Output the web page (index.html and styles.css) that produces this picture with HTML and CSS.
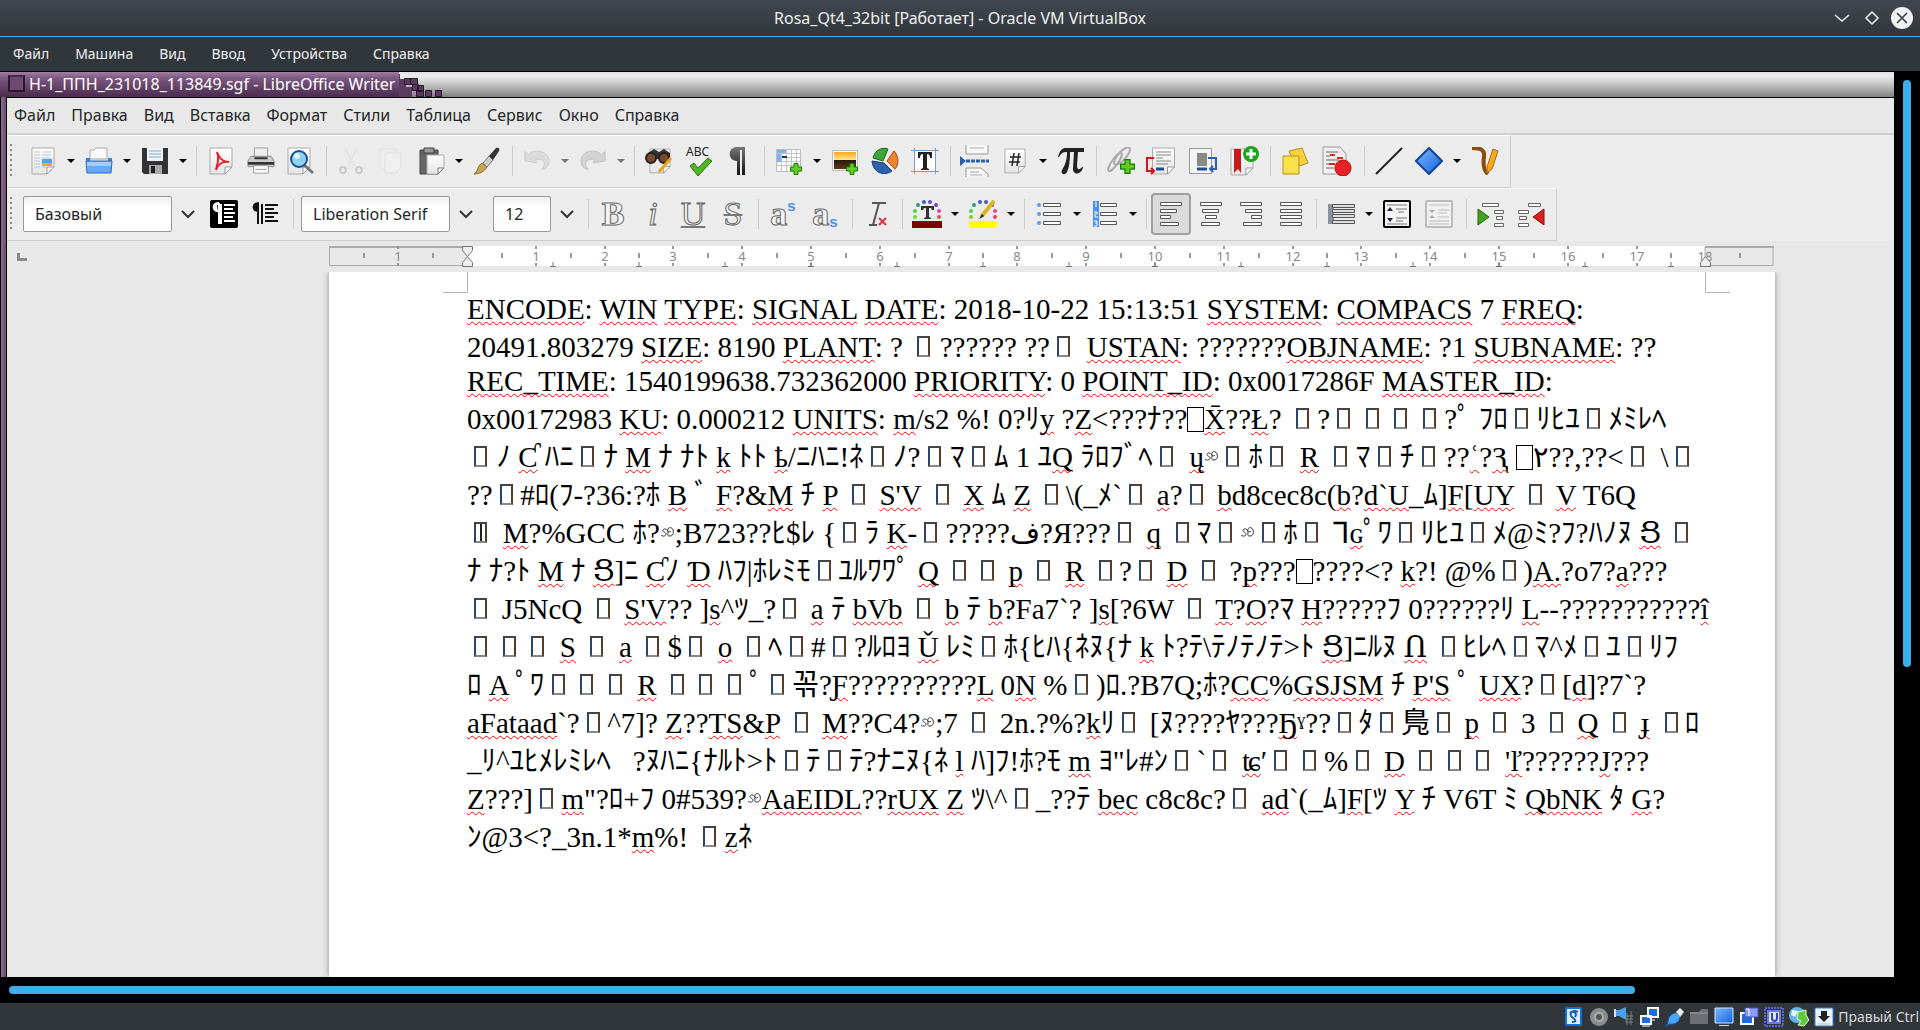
FILE: index.html
```html
<!DOCTYPE html>
<html lang="ru">
<head>
<meta charset="utf-8">
<title>Rosa_Qt4_32bit [Работает] - Oracle VM VirtualBox</title>
<link rel="stylesheet" href="styles.css">
</head>
<body>
<svg class="defs" aria-hidden="true">
  <defs>
    <linearGradient id="blue" x1="0" y1="0" x2="1" y2="1"><stop offset="0" stop-color="#7db8ff"/><stop offset="1" stop-color="#0f62dd"/></linearGradient>
    <linearGradient id="paper" x1="0" y1="0" x2="0" y2="1"><stop offset="0" stop-color="#fff"/><stop offset="1" stop-color="#e4e4e4"/></linearGradient>
    <linearGradient id="steel" x1="0" y1="0" x2="0" y2="1"><stop offset="0" stop-color="#777"/><stop offset="1" stop-color="#111"/></linearGradient>
    <linearGradient id="sun" x1="0" y1="0" x2="0" y2="1"><stop offset="0" stop-color="#f9a81c"/><stop offset="0.45" stop-color="#fde58a"/><stop offset="0.5" stop-color="#2a1a0c"/><stop offset="1" stop-color="#5a3a12"/></linearGradient>
    <symbol id="swirl" viewBox="0 0 15 12"><path d="M1 9c2 2 5 1 5-1S2 6 3 4s5-1 5 2-1 4 2 4 4-3 3-6-4-3-5-1 1 4 3 2" fill="none" stroke="#333"/></symbol>
    <symbol id="plus" viewBox="0 0 12 12"><path d="M4 0.500h4V4h3.500v4H8v3.500H4V8H.5V4H4z" fill="#5fce1e" stroke="#1c7a08"/></symbol>
    <symbol id="sheet" viewBox="0 0 24 28"><path d="M1 1h22v19l-7 7H1z" fill="url(#paper)" stroke="#aaa"/><path d="M16 27v-7h7z" fill="#fff" stroke="#999"/></symbol>
  </defs>
</svg>

<header class="titlebar">
  <h1>Rosa_Qt4_32bit [Работает] - Oracle VM VirtualBox</h1>
  <div class="win-buttons">
    <button aria-label="Свернуть"><svg width="22" height="22"><path d="M4 8l7 6 7-6" fill="none" stroke="#eff0f1" stroke-width="1.500"/></svg></button>
    <button aria-label="Развернуть"><svg width="22" height="22"><path d="M11 5l6 6-6 6-6-6z" fill="none" stroke="#eff0f1" stroke-width="1.500"/></svg></button>
    <button aria-label="Закрыть"><svg width="22" height="22"><circle cx="11" cy="11" r="11" fill="#eff0f1"/><path d="M6 6l10 10M16 6L6 16" stroke="#31363b" stroke-width="1.500"/></svg></button>
  </div>
</header>
<nav class="host-menu">
  <button>Файл</button><button>Машина</button><button>Вид</button><button>Ввод</button><button>Устройства</button><button>Справка</button>
</nav>

<main class="machine">
<section class="guest">
  <div class="guest-title">
    <div class="tab"><span class="tab-icon"></span>Н-1_ППН_231018_113849.sgf - LibreOffice Writer</div>
    <svg class="tail" width="48" height="25"><path d="M0 2h1v5h6v8h6v10H0z" fill="#5d3c62"/><g fill="#5a3a5e" stroke="#2c1630"><path d="M5.500 6.500h6v6h-6zM11.500 6.500h7v6h-7zM13.500 12.500h6v6h-6zM18.500 13.500h6v6h-6zM17.500 18.500h7v6h-7zM26.500 18.500h6v6h-6zM36.500 18.500h6v6h-6z"/></g></svg>
  </div>
  <div class="writer">
    <nav class="menu">
      <button>Файл</button><button>Правка</button><button>Вид</button><button>Вставка</button><button>Формат</button><button>Стили</button><button>Таблица</button><button>Сервис</button><button>Окно</button><button>Справка</button>
    </nav>

    <div class="bars">
    <div class="bar">
      <span class="grip"></span>
      <button aria-label="Создать"><svg width="28" height="28"><use href="#sheet" x="2" width="24" height="28"/><path d="M5 5h6M5 8h6M5 11h6M5 14h6M5 17h6M5 20h6M13 5h9M13 8h9M13 11h9M13 20h5" stroke="#b5c8d8"/><path d="M13 12h10v7H13z" fill="#f0a830"/><path d="M13 12h10v4H13z" fill="#4aa6e6"/></svg></button><button class="drop" aria-label="Ещё"></button>
      <button aria-label="Открыть"><svg width="28" height="28"><path d="M5 12V3h4l2-2h11v11z" fill="#fafafa" stroke="#aaa"/><path d="M1 11h4v3h18v-3h4v3H1z" fill="#3b7fd2"/><path d="M1 14h26l-1 12H2z" fill="#6aa9f2" stroke="#2a6cc4"/><path d="M2 15h24v4H2z" fill="#a5cdfb"/></svg></button><button class="drop" aria-label="Ещё"></button>
      <button aria-label="Сохранить"><svg width="28" height="28"><path d="M1 1h26v26H3l-2-2z" fill="#333"/><path d="M6 1h16v13H6z" fill="#edf3fa"/><path d="M8 4h12M8 7h12M8 10h12" stroke="#8ab"/><path d="M8 18h13v9H8z" fill="#aaa"/><path d="M10 19h4v7h-4z" fill="#222"/></svg></button><button class="drop" aria-label="Ещё"></button>
      <span class="sep"></span>
      <button aria-label="PDF"><svg width="28" height="28"><use href="#sheet" x="2" width="24" height="28"/><path d="M10 5c2 6 6 10 12 10-6-1-11 2-13 8 1-6 4-11 1-18z" fill="none" stroke="#e0242a" stroke-width="2"/></svg></button>
      <button aria-label="Печать"><svg width="28" height="28" viewBox="0 0 30 28"><path d="M8 0h14v10H8z" fill="#eee" stroke="#999"/><path d="M4 9h22l3 5v6H1v-6z" fill="#ccc" stroke="#888"/><path d="M1 15h28v3H1zM8 10h14v2H8z" fill="#333"/><path d="M7 19h16v8H7z" fill="#fafafa" stroke="#999"/><path d="M9 23h12" stroke="#999"/></svg></button>
      <button aria-label="Просмотр"><svg width="28" height="28"><use href="#sheet" width="24" height="28"/><path d="M16 17l10 9" stroke="#777" stroke-width="3"/><circle cx="12" cy="12" r="8" fill="#8fd0f5" stroke="#1d4f8f" stroke-width="2"/><circle cx="10" cy="9" r="3" fill="#dff4ff"/></svg></button>
      <span class="sep"></span>
      <button class="off" aria-label="Вырезать"><svg width="28" height="28"><path d="M8 1l9 18M20 1l-9 18" stroke="#ddd" stroke-width="2"/><g fill="none" stroke="#aaa" stroke-width="2"><circle cx="6" cy="23" r="3"/><circle cx="22" cy="23" r="3"/></g></svg></button>
      <button class="off" aria-label="Копировать"><svg width="28" height="28"><path d="M3 2h16v20H3z" fill="#eee" stroke="#ddd"/><path d="M8 6h16v14l-5 6H8z" fill="#f2f2f2" stroke="#d4d4d4"/></svg></button>
      <button aria-label="Вставить"><svg width="28" height="28"><path d="M3 3h18v24H3z" fill="#666" stroke="#444"/><path d="M7 1h10v5H7z" fill="#999" stroke="#444"/><path d="M10 8h17v13l-6 6H10z" fill="url(#paper)" stroke="#aaa"/><path d="M21 27v-6h6z" fill="#fff" stroke="#777"/></svg></button><button class="drop" aria-label="Ещё"></button>
      <button aria-label="Кисть"><svg width="28" height="28"><path d="M1 27c4-2 3-8 8-11l5 4c-3 5-8 7-13 7z" fill="#c9a44c" stroke="#8a6a2a"/><path d="M10 16l6-7 4 4-6 7z" fill="#ccc" stroke="#777"/><path d="M16 9l7-8c3-1 4 1 3 3l-6 9z" fill="#333"/></svg></button>
      <span class="sep"></span>
      <button class="off" aria-label="Отменить"><svg width="26" height="26" viewBox="0 0 28 28"><path d="M1 4l4 3c6-7 22-4 22 7 0 6-4 9-8 9 5-5 4-11-4-11h-3l2 4-13-2z" fill="#ccc" stroke="#aaa"/></svg></button><button class="drop off" aria-label="Ещё"></button>
      <button class="off" aria-label="Вернуть"><svg width="26" height="26" viewBox="0 0 28 28"><path d="M27 4l-4 3C17 0 1 3 1 14c0 6 4 9 8 9-5-5-4-11 4-11h3l-2 4 13-2z" fill="#bbb" stroke="#999"/></svg></button><button class="drop off" aria-label="Ещё"></button>
      <span class="sep"></span>
      <button aria-label="Найти"><svg width="28" height="28"><use href="#sheet" x="4" width="22" height="28"/><path d="M3 6l6-4 5 3 5-3 6 4v6H3z" fill="#3a3230"/><circle cx="6" cy="11" r="5" fill="#7a4a2a" stroke="#222" stroke-width="2"/><circle cx="19" cy="11" r="5" fill="#7a4a2a" stroke="#222" stroke-width="2"/><path d="M26 11L14 25" stroke="#e8a51c" stroke-width="3"/></svg></button>
      <button aria-label="Орфография"><svg class="abc" width="28" height="32"><text x="1" y="11">ABC</text><path d="M5 21l4-3 4 5 10-10 4 3-14 15z" fill="#52b526" stroke="#2d7a10"/></svg></button>
      <button aria-label="Знаки"><svg width="28" height="28"><path d="M20 0v28h-3V3h-2v25h-3V14C3 14 2 1 11 0z" fill="url(#steel)"/></svg></button>
      <span class="sep"></span>
      <button aria-label="Таблица"><svg width="28" height="28"><path d="M1.500 2.500h24v22h-24z" fill="#fff" stroke="#bbb"/><path d="M1 6.500h25M1 10.500h25M1 14.500h25M1 18.500h25M6.500 2v23M11.500 2v23M16.500 2v23M21.500 2v23" stroke="#c4c4c4"/><path d="M2 3h9v3H2zM2 7h4v8H2z" fill="#7db2f0"/><path d="M7 10h5" stroke="#234" stroke-width="2"/><use href="#plus" x="15" y="16" width="12" height="12"/></svg></button><button class="drop" aria-label="Ещё"></button>
      <button aria-label="Изображение"><svg width="28" height="28"><path d="M1.500 3.500h25v20h-25z" fill="#fff" stroke="#bbb"/><path d="M3 5h22v17H3z" fill="url(#sun)"/><use href="#plus" x="15" y="16" width="12" height="12"/></svg></button>
      <button aria-label="Диаграмма"><svg width="28" height="28"><path d="M12 14L2 11C4 2 12 0 17 2z" fill="#3da53a" stroke="#1a6a1a"/><path d="M16 14l7-10c5 5 5 14 1 18z" fill="#f08232" stroke="#a84a10"/><path d="M13 16l8 8C12 30 2 25 1 14z" fill="#2c62b0" stroke="#173c78"/></svg></button>
      <button aria-label="Текст"><svg width="28" height="28"><path d="M3 3h22v22H3z" fill="#fff"/><path d="M0 3.500h28M0 24.500h28M3.500 1v26M24.500 1v26" stroke="#7c9cc4"/><path d="M7 5h14v6h-2c0-3-1-4-3-4v14l2 1v1h-8v-1l2-1V7c-2 0-3 1-3 4H7z" fill="#222"/></svg></button>
      <span class="sep"></span>
      <button aria-label="Разрыв"><svg width="30" height="32"><path d="M6 0v9h22V0M6 32v-9h15l7 6v3" fill="#f6f6f6" stroke="#999"/><path d="M10 3h14M10 27h9M10 30h12" stroke="#aaa"/><path d="M0 11l6 5-6 5z" fill="#2a5fae"/><path d="M6 16h23" stroke="#2a5fae" stroke-width="3" stroke-dasharray="4 1"/></svg></button>
      <button aria-label="Поле"><svg width="28" height="28"><use href="#sheet" x="3" width="22" height="28"/><path d="M13 6l-2 13M18 6l-2 13M9 10h11M8 15h11" stroke="#222" stroke-width="1.500"/></svg></button><button class="drop" aria-label="Ещё"></button>
      <button aria-label="Формула"><svg width="28" height="28"><path d="M1 10C3 3 5 1 9 1h18v4h-6l-1 14c0 4 3 4 5 1h1c-1 8-11 9-10 1l1-16h-4c0 9-1 16-3 20-2 4-7 2-5-2 3-5 5-9 5-18-4 0-6 1-8 5z" fill="#222"/></svg></button>
      <span class="sep"></span>
      <button aria-label="Ссылка"><svg width="30" height="28"><g fill="none" stroke="#aaa" stroke-width="2"><ellipse cx="9" cy="15" rx="11" ry="3" transform="rotate(-55 9 15)"/><ellipse cx="16" cy="9" rx="11" ry="4" transform="rotate(-48 16 9)"/></g><use href="#plus" x="14" y="12" width="15" height="15"/></svg></button>
      <button aria-label="Сноска"><svg width="30" height="28"><use href="#sheet" x="5" width="25" height="28"/><path d="M10 5h15M10 8h15M10 11h7M10 14h15M10 17h12" stroke="#888"/><path d="M10 22h8" stroke="#1e4f96" stroke-width="3"/><path d="M8 11H1v13h6M5 21l3 3-3 3" fill="none" stroke="#d21414" stroke-width="2"/></svg></button>
      <button class="wide" aria-label="Концевая сноска"><svg width="30" height="28"><path d="M1.500 1.500h22v25h-22z" fill="#f4f4f4" stroke="#999"/><path d="M9 6h10v13H9z" fill="#888b84"/><path d="M9 22h10" stroke="#1e4f96" stroke-width="3"/><path d="M20 11h8v11h-5M25 19l-3 3 3 3" fill="none" stroke="#2a5fae" stroke-width="2"/></svg></button>
      <button aria-label="Закладка"><svg width="30" height="30"><use href="#sheet" y="2" width="24" height="28"/><path d="M4 3h7v24l-3-4-4 4z" fill="#c8191e"/><circle cx="21" cy="8" r="8" fill="#18a51c"/><path d="M21 3v10M16 8h10" stroke="#fff" stroke-width="3"/></svg></button>
      <span class="sep"></span>
      <button aria-label="Комментарий"><svg width="28" height="28"><path d="M8 4l13-3 6 15-12 4z" fill="#f7d23c" stroke="#b8901a"/><path d="M2 9h16v18H2z" fill="#fbe04e" stroke="#b8901a"/></svg></button>
      <button class="wide" aria-label="Исправления"><svg width="30" height="30"><path d="M1 1h17l6 7v20H1z" fill="#f0f0f0" stroke="#999"/><path d="M4 6h12M4 10h4M4 14h13M4 18h8M4 22h8" stroke="#aaa" stroke-width="2"/><path d="M8 9h5M15 12h6M7 18h6" stroke="#e02020" stroke-width="2"/><circle cx="21" cy="22" r="8" fill="#e62226" stroke="#b01015"/></svg></button>
      <span class="sep"></span>
      <button aria-label="Линия"><svg width="28" height="28"><path d="M1 27L27 1" stroke="#222" stroke-width="2"/></svg></button>
      <button aria-label="Фигуры"><svg width="28" height="28"><path d="M14 1l13 13-13 13L1 14z" fill="url(#blue)" stroke="#12429a" stroke-width="2"/></svg></button><button class="drop" aria-label="Ещё"></button>
      <button aria-label="Рисунок"><svg width="28" height="28"><path d="M1 1c9 0 13 2 12 9-1 7-1 13 4 17" fill="none" stroke="#8a4a10" stroke-width="4"/><path d="M22 2l5 2-6 18-5 4v-6z" fill="#f7a81c" stroke="#a86a10"/></svg></button>
    </div>

    <div class="bar">
      <span class="grip"></span>
      <input class="style-box" aria-label="Стиль абзаца" value="Базовый"><button class="chev" aria-label="Список"><svg width="14" height="10"><path d="M1 2l6 6 6-6" fill="none" stroke="#333" stroke-width="2"/></svg></button>
      <button aria-label="Обновить стиль"><svg width="28" height="28"><rect width="28" height="28" rx="2"/><path d="M7 4h2v20M11 4v20M9 3c-7 0-7 8-1 8" stroke="#fff" stroke-width="2" fill="#fff"/><path d="M14 5h11M14 9h9M14 13h11M14 17h9M14 21h11" stroke="#fff" stroke-width="2"/></svg></button>
      <button class="wide" aria-label="Новый стиль"><svg width="28" height="28"><path d="M6 4v20M10 4v20M7 3c-7 0-7 8-1 8" stroke="#111" stroke-width="2" fill="#111"/><path d="M13 5h13M13 9h9M13 13h13M13 17h9M13 21h13" stroke="#111" stroke-width="2"/></svg></button>
      <span class="sep"></span>
      <input class="font-box" aria-label="Шрифт" value="Liberation Serif"><button class="chev" aria-label="Список"><svg width="14" height="10"><path d="M1 2l6 6 6-6" fill="none" stroke="#333" stroke-width="2"/></svg></button>
      <input class="size-box" aria-label="Размер" value="12"><button class="chev" aria-label="Список"><svg width="14" height="10"><path d="M1 2l6 6 6-6" fill="none" stroke="#333" stroke-width="2"/></svg></button>
      <span class="sep"></span>
      <button class="glyph" aria-label="Полужирный"><b>B</b></button>
      <button class="glyph" aria-label="Курсив"><em>i</em></button>
      <button class="glyph under" aria-label="Подчёркнутый">U</button>
      <button class="glyph strike" aria-label="Зачёркнутый">S</button>
      <span class="sep"></span>
      <button class="glyph script" aria-label="Надстрочный">a<sup>s</sup></button>
      <button class="glyph script wide" aria-label="Подстрочный">a<sub>s</sub></button>
      <span class="sep"></span>
      <button aria-label="Очистить"><svg width="28" height="28"><path d="M9 3h14M6 25h8M16 3l-6 22" stroke="#555" stroke-width="2"/><path d="M16 18l7 7M23 18l-7 7" stroke="#dc3545" stroke-width="2"/></svg></button>
      <span class="sep"></span>
      <button aria-label="Цвет шрифта"><svg width="30" height="28"><g id="dots"><circle cx="3" cy="17" r="2" fill="#7ed321"/><circle cx="3" cy="11" r="2" fill="#45d945"/><circle cx="6" cy="5" r="2" fill="#2a9a8a"/><circle cx="12" cy="2" r="2" fill="#3b5fd0"/><circle cx="18" cy="2" r="2" fill="#6a4ac0"/><circle cx="24" cy="5" r="2" fill="#8a3ab0"/><circle cx="27" cy="11" r="2" fill="#e040a0"/><circle cx="27" cy="17" r="2" fill="#f04848"/></g><path d="M9 6h13v4h-2l-1-2h-2v9l2 1v1h-7v-1l2-1V8h-2l-1 2H9z" fill="#333"/><path d="M0 21h30v7H0z" fill="#800000"/></svg></button><button class="drop" aria-label="Ещё"></button>
      <button aria-label="Выделение цветом"><svg width="30" height="28"><use href="#dots"/><path d="M26 1L13 17" stroke="#d9b520" stroke-width="4"/><path d="M14 14l-3 5 5-3z" fill="#222"/><path d="M1 21h28v7H1z" fill="#ff0"/></svg></button><button class="drop" aria-label="Ещё"></button>
      <span class="sep"></span>
      <button aria-label="Маркеры"><svg width="26" height="28"><g fill="#5a9bf0"><circle cx="3" cy="5" r="2"/><circle cx="3" cy="14" r="2"/><circle cx="3" cy="23" r="2"/></g><path d="M7.500 3.500h17v3h-17zM7.500 12.500h17v3h-17zM7.500 21.500h17v3h-17z" fill="#fff" stroke="#555"/></svg></button><button class="drop" aria-label="Ещё"></button>
      <button aria-label="Нумерация"><svg width="26" height="28"><path d="M1 1h6v26H1z" fill="#4a90f0"/><path d="M3 3l1-1v5M2 12h3v2H3v3h3M2 21h3v5H2M3 23h2" stroke="#fff" fill="none"/><path d="M8.500 3.500h16v3h-16zM8.500 12.500h16v3h-16zM8.500 21.500h16v3h-16z" fill="#fff" stroke="#555"/></svg></button><button class="drop" aria-label="Ещё"></button>
      <span class="sep"></span>
      <button class="pressed" aria-label="По левому краю"><svg width="22" height="26"><path d="M.5 1.500h21v3H.5zM.5 8.500h16v3H.5zM.5 14.500h10v3H.5zM.5 21.500h18v3H.5z" fill="#fff" stroke="#555"/></svg></button>
      <button aria-label="По центру"><svg width="22" height="26"><path d="M.5 1.500h21v3H.5zM2.500 8.500h16v3h-16zM5.500 14.500h11v3h-11zM1.500 21.500h18v3h-18z" fill="#fff" stroke="#555"/></svg></button>
      <button aria-label="По правому краю"><svg width="22" height="26"><path d="M.5 1.500h21v3H.5zM5.500 8.500h16v3h-16zM11.500 14.500h10v3h-10zM3.500 21.500h18v3h-18z" fill="#fff" stroke="#555"/></svg></button>
      <button aria-label="По ширине"><svg width="22" height="26"><path d="M.5 1.500h21v3H.5zM.5 8.500h21v3H.5zM.5 14.500h21v3H.5zM.5 21.500h21v3H.5z" fill="#fff" stroke="#555"/></svg></button>
      <span class="sep"></span>
      <button aria-label="Интервал"><svg width="28" height="28"><path d="M1 4h6v20H1z" fill="#8b9299"/><path d="M5.500 4.500h22v3h-22zM5.500 9.500h22v3h-22zM5.500 14.500h22v3h-22zM5.500 20.500h22v3h-22z" fill="#ddd" stroke="#555"/></svg></button><button class="drop" aria-label="Ещё"></button>
      <button aria-label="Увеличить интервал"><svg width="28" height="28"><rect x="1" y="1" width="26" height="26" rx="1" fill="#f4f4f4" stroke="#000" stroke-width="2"/><path d="M4 5h20M13 9h11M15 12h6M13 18h11M13 21h7M4 24h20" stroke="#777"/><path d="M4 11l3-4 3 4zM4 18h6l-3 4z" fill="#224"/></svg></button>
      <button class="wide" aria-label="Уменьшить интервал"><svg width="28" height="28"><rect x="1" y="1" width="26" height="26" rx="1" fill="#f0f0f0" stroke="#bbb" stroke-width="2"/><path d="M4 5h20M13 10h11M13 13h9M13 17h11M4 21h20M4 24h20" stroke="#bbb"/><path d="M4 10h6l-3 3zM4 18h6l-3-3z" fill="#aaa"/></svg></button>
      <span class="sep"></span>
      <button aria-label="Увеличить отступ"><svg width="28" height="28"><path d="M5.500 3.500h16v3h-16zM17.500 10.500h9v3h-9zM19.500 16.500h6v3h-6zM17.500 23.500h9v3h-9z" fill="#fff" stroke="#666"/><path d="M1 9l11 8-11 8z" fill="#43a01e" stroke="#226a0a"/></svg></button>
      <button aria-label="Уменьшить отступ"><svg width="28" height="28"><path d="M11.500 3.500h12v3h-12zM1.500 10.500h10v3h-10zM2.500 16.500h7v3h-7zM1.500 23.500h10v3h-10z" fill="#fff" stroke="#666"/><path d="M27 9v16l-11-8z" fill="#dc2020" stroke="#8a0a0a"/></svg></button>
    </div>
    </div>

    <div class="desk">
      <svg class="corner" width="10" height="8"><path d="M1.500 0v6.500H10" fill="none" stroke="#888" stroke-width="3"/></svg>
      <div class="canvas">
      <svg class="ruler" width="1446" height="24" viewBox="0 0 1446 24" aria-label="Линейка">
        <defs>
          <g id="cm"><path d="M0 0v3M0 17v3M-34 7v5" stroke="#999" stroke-width="2"/></g>
          <path id="stop" d="M0 16v5M-3 20.500h6" stroke="#777" fill="none"/>
        </defs>
        <path d="M138 0h1238v20H138z" fill="#fff"/>
        <path d="M.5 1h138v18.500H.5zM1376 1h68v18.500h-68z" fill="#e8e8e8" stroke="#aaa"/>
        <path d="M0 1h138M1376 1h69" stroke="#aaa" stroke-width="2"/>
        <use href="#cm" x="69"/><use href="#cm" x="207"/><use href="#cm" x="276"/><use href="#cm" x="344"/><use href="#cm" x="413"/><use href="#cm" x="482"/><use href="#cm" x="551"/><use href="#cm" x="620"/><use href="#cm" x="688"/><use href="#cm" x="757"/><use href="#cm" x="826"/><use href="#cm" x="895"/><use href="#cm" x="964"/><use href="#cm" x="1032"/><use href="#cm" x="1101"/><use href="#cm" x="1170"/><use href="#cm" x="1239"/><use href="#cm" x="1308"/><path d="M104 7v5M1342 7v5M1411 7v5" stroke="#999" stroke-width="2"/>
        <use href="#stop" x="224"/><use href="#stop" x="310"/><use href="#stop" x="396"/><use href="#stop" x="482"/><use href="#stop" x="568"/><use href="#stop" x="654"/><use href="#stop" x="740"/><use href="#stop" x="826"/><use href="#stop" x="912"/><use href="#stop" x="998"/><use href="#stop" x="1084"/><use href="#stop" x="1170"/><use href="#stop" x="1256"/><use href="#stop" x="1342"/>
        <g class="nums"><text x="69" y="15">1</text><text x="207" y="15">1</text><text x="276" y="15">2</text><text x="344" y="15">3</text><text x="413" y="15">4</text><text x="482" y="15">5</text><text x="551" y="15">6</text><text x="620" y="15">7</text><text x="688" y="15">8</text><text x="757" y="15">9</text><text x="826" y="15">10</text><text x="895" y="15">11</text><text x="964" y="15">12</text><text x="1032" y="15">13</text><text x="1101" y="15">14</text><text x="1170" y="15">15</text><text x="1239" y="15">16</text><text x="1308" y="15">17</text><text x="1376" y="15">18</text></g>
        <path d="M133.500.5h10v4l-5 6-5-6zM133.500 20.500h10v-4l-5-6-5 6zM1371.500 20.500h10v-4l-5-6-5 6z" fill="#eee" stroke="#777"/>
      </svg>
      <article class="page">
        <svg class="marks" width="1446" height="21"><path d="M114 20.500h24.500V0M1401 20.500h-24.500V0" fill="none" stroke="#b4b4b4"/></svg>
        <div class="text">
<p><u>ENCODE</u>: <u>WIN</u> <u>TYPE</u>: <u>SIGNAL</u> <u>DATE</u>: 2018-10-22 15:13:51 <u>SYSTEM</u>: <u>COMPACS</u> 7 <u>FREQ</u>:</p>
<p class="loose">20491.803279 <u>SIZE</u>: 8190 <u>PLANT</u>: ?  <i></i> ?????? ?? <i></i>  <u>USTAN</u>: ???????<u>OBJNAME</u>: ?1 <u>SUBNAME</u>: ??</p>
<p class="tight"><u>REC_TIME</u>: 1540199638.732362000 <u>PRIORITY</u>: 0 <u>POINT_ID</u>: 0x0017286F <u>MASTER_ID</u>:</p>
<p>0x00172983 <u>KU</u>: 0.000212 <u>UNITS</u>: <u>m</u>/s2 %! 0?ﾘ<u>y</u> ?<u>Z</u>&lt;???ﾅ??<i class="tofu"></i><u>X̄</u>??<u>Ł</u>?  <i></i> ? <i></i>  <i></i>  <i></i>  <i></i> ?ﾟ ﾌﾛ <i></i> ﾘﾋﾕ <i></i> ﾒﾐﾚﾍ</p>
<p class="loose"> <i></i> ﾉ <u>Ƈ</u> ﾊﾆ <i></i> ﾅ <u>M</u> ﾅ ﾅﾄ <u>k</u> ﾄﾄ <u>ҍ</u>/ﾆﾊﾆ!ﾈ <i></i> ﾉ? <i></i> ﾏ <i></i> ﾑ 1 ﾕ<u>Q</u> ﾗﾛﾌﾞﾍ <i></i>  <u>ų</u><svg class="sw"><use href="#swirl"/></svg> <i></i> ﾎ <i></i>  <u>R</u>  <i></i> ﾏ <i></i> ﾁ <i></i> ??<u>ʿ</u>?<u>Ԇ</u> <i class="tofu"></i>۲??,??&lt; <i></i>  \ <i></i></p>
<p class="dense">?? <i></i> #ﾛ(ﾌ-?36:?ﾎ <u>B</u> ﾞ <u>F</u>?&amp;<u>M</u> ﾁ <u>P</u>  <i></i>  <u>S'V</u>  <i></i>  <u>X</u> ﾑ <u>Z</u>  <i></i> \(_ﾒ` <i></i>  <u>a</u>? <i></i>  <u>b</u>d8cec8c(<u>b</u>?<u>d`U</u>_ﾑ]<u>F</u>[<u>UY</u>  <i></i>  <u>V</u> T6Q</p>
<p> <i class="ibeam"></i>  <u>M</u>?%GCC ﾎ?<svg class="sw"><use href="#swirl"/></svg>;B723??ﾋ$ﾚ { <i></i> ﾗ <u>K</u>- <i></i> ?????ف?Я??? <i></i>  <u>q</u>  <i></i> ﾏ <i></i> <svg class="sw"><use href="#swirl"/></svg> <i></i> ﾎ <i></i>  ⅂<u>ɢ</u>ﾟﾜ <i></i> ﾘﾋﾕ <i></i> ﾒ@ﾐ?ﾌ?ﾊﾉﾇ <u>Ց</u>  <i></i></p>
<p class="dense">ﾅ ﾅ?ﾄ <u>M</u> ﾅ <u>Ց</u>]ﾆ <u>Ƈ</u>ﾉ <u>Ɗ</u> ﾊﾌ|ﾎﾚﾐﾓ <i></i> ﾕﾙﾜﾜﾟ <u>Q</u>  <i></i>  <i></i>  <u>p</u>  <i></i>  <u>R</u>  <i></i> ? <i></i>  <u>D</u>  <i></i>  ?<u>p</u>???<i class="tofu"></i>????&lt;? <u>k</u>?! @% <i></i> )<u>A.</u>?o7?<u>a</u>???</p>
<p class="dense"> <i></i>  J5NcQ  <i></i>  <u>S'V</u>?? ]<u>s</u>^ﾂ_? <i></i>  <u>a</u> ﾃ <u>bVb</u>  <i></i>  <u>b</u> ﾃ <u>b</u>?Fa7`? ]<u>s</u>[?6W  <i></i>  <u>T</u>?<u>O</u>?ﾏ <u>H</u>?????ﾌ 0??????ﾘ <u>L</u>--???????????<u>î</u></p>
<p> <i></i>  <i></i>  <i></i>  <u>S</u>  <i></i>  <u>a</u>  <i></i> $ <i></i>  <u>o</u>  <i></i> ﾍ <i></i> # <i></i> ?ﾙﾛﾖ <u>Ǔ</u> ﾚﾐ <i></i> ﾎ{ﾋﾊ{ﾈﾇ{ﾅ <u>k</u> ﾄ?ﾃ\ﾃﾉﾃﾉﾃ&gt;ﾄ <u>Ց</u>]ﾆﾙﾇ <u>Ո</u>  <i></i> ﾋﾚﾍ <i></i> ﾏ^ﾒ <i></i> ﾕ <i></i> ﾘﾌ</p>
<p>ﾛ <u>A</u> ﾟﾜ <i></i>  <i></i>  <i></i>  <u>R</u>  <i></i>  <i></i>  <i></i> ﾟ <i></i> 꼮?<u>Ƒ</u>??????????<u>L</u> 0<u>N</u> % <i></i> )ﾛ.?B7Q;ﾎ?<u>CC</u>%<u>GSJSM</u> ﾁ <u>P'S</u> ﾟ <u>UX</u>? <i></i> [<u>d</u>]?7`?</p>
<p class="dense"><u>aFataad</u>`? <i></i> ^7]? <u>Z</u>??<u>TS</u>&amp;<u>P</u>  <i></i>  <u>M</u>??C4?<svg class="sw"><use href="#swirl"/></svg>;7  <i></i>  2n.?%?<u>k</u>ﾘ <i></i>  [ﾇ????ﾔ???<u>Ҕ</u>ˠ?? <i></i> ﾀ <i></i> 鳬 <i></i>  <u>p</u>  <i></i>  3  <i></i>  <u>Q</u>  <i></i>  <u>ɟ</u>  <i></i> ﾛ</p>
<p>_ﾘ^ﾕﾋﾒﾚﾐﾚﾍ   ?ﾇﾊﾆ{ﾅﾙﾄ&gt;ﾄ <i></i> ﾃ <i></i> ﾃ?ﾅﾆﾇ{ﾈ <u>l</u> ﾊ]ﾌ!ﾎ?ﾓ <u>m</u> ﾖ"ﾚ#ﾝ <i></i> ` <i></i>  <u>ʨ</u>ʹ <i></i>  <i></i> % <i></i>  <u>D</u>  <i></i>  <i></i>  <i></i>  <u>'ľ</u>??????<u>J</u>???</p>
<p><u>Z</u>???] <i></i> <u>m</u>"?ﾛ+ﾌ 0#539?<svg class="sw"><use href="#swirl"/></svg><u>AaEIDL</u>??<u>rUX</u> <u>Z</u> ﾂ\^ <i></i> _??ﾃ <u>bec</u> c8c8c? <i></i>  <u>ad</u>`(_ﾑ]<u>F</u>[ﾂ <u>Y</u> ﾁ V6T ﾐ <u>QbNK</u> ﾀ <u>G</u>?</p>
<p class="loose">ﾝ@3&lt;?_3n.1*<u>m</u>%!  <i></i> <u>z</u>ﾈ</p>
        </div>
      </article>
      </div>
    </div>
  </div>
</section>
<div class="vscroll"><span></span></div>
<div class="hscroll"><span></span></div>
</main>

<footer class="status">
  <svg width="20" height="20"><rect x="1" width="17" height="19" rx="1" fill="#0f6fd6"/><path d="M3 2h13v15H3z" fill="#dcecfb"/><path d="M14 5C9 2 4 7 8 10s5 5 0 5M6 6c3-3 8 0 5 4" fill="none" stroke="#1a5ca8" stroke-width="2"/></svg>
  <svg width="20" height="20"><circle cx="10" cy="10" r="9" fill="#8a8d90"/><circle cx="10" cy="10" r="5" fill="#aaa"/><circle cx="10" cy="10" r="3" fill="#555"/></svg>
  <svg width="20" height="20"><path d="M1 3h4l7-3v13l-7-4H1z" fill="#4aa0f0"/><path d="M1 2v8" stroke="#cfe6ff" stroke-width="2"/><path d="M13 6v12M17 4v14M11 9h8M11 12h8M11 15h8" stroke="#7a8086"/></svg>
  <svg width="20" height="20"><path d="M9 1h10v9H9zM2 9h10v8H2z" fill="#1c6be0" stroke="#fff" stroke-width="2"/><path d="M12 13h4M3 19h8" stroke="#fff"/></svg>
  <svg width="20" height="20"><path d="M1 19l3-3C3 9 10 5 13 6l3 4c0 5-6 8-10 7z" fill="#4aa6f5" stroke="#0c55b0"/><path d="M12 5l4-4 4 4-4 5z" fill="#eee" stroke="#999"/></svg>
  <svg width="20" height="20"><path d="M1 5h9l2-3h7v15H1z" fill="#6c7074"/><path d="M1 6h18" stroke="#999"/></svg>
  <svg width="20" height="20"><path d="M1 1h18v15H1z" fill="url(#blue)" stroke="#cfe4ff"/><path d="M5 18.500h10" stroke="#ddd"/></svg>
  <svg width="20" height="20"><path d="M2 6h12v11H2z" fill="#1c6be0" stroke="#fff" stroke-width="2"/><path d="M6 1h13v9H6z" fill="#8a9cf5" stroke="#4455c8"/><path d="M7 2h3v7" stroke="#fff" fill="none"/></svg>
  <svg width="20" height="20"><rect x="1" y="1" width="18" height="18" fill="none" stroke="#5668d8" stroke-width="2" stroke-dasharray="2 1"/><path d="M3 3h14v14H3z" fill="#6a7ae0"/><path d="M5 5h10v10H5z" fill="#dfe4ff"/><path d="M8 6v5c0 4 5 4 5 0V6" fill="none" stroke="#3545b0" stroke-width="2"/></svg>
  <svg width="20" height="20"><circle cx="8" cy="8" r="8" fill="#5fb4ec"/><path d="M3 3l6 1-3 6-4-2z" fill="#e8f8ff"/><path d="M9 5l8-2v5l3 5-5 6-6-1 3-4-4-2z" fill="#63c83a" stroke="#e8ffe0"/></svg>
  <svg width="20" height="20"><rect x="1" y="1" width="18" height="18" rx="1" fill="#eaf2fb" stroke="#3a80d8"/><path d="M7 4h6v5h3l-6 6-6-6h3z" fill="#222"/><path d="M4 17h12" stroke="#bbb"/></svg>
  <span>Правый Ctrl</span>
</footer>
</body>
</html>
```
FILE: styles.css
```css
* { box-sizing: border-box; }
body {
  margin: 0;
  height: 100vh;
  display: flex;
  flex-direction: column;
  background: #31363b;
  color: #eff0f1;
  font: 14px/20px "Noto Sans", sans-serif;
  overflow: hidden;
}
button { border: 0; padding: 0; background: none; color: inherit; font: inherit; }
.defs { position: absolute; width: 0; height: 0; }

/* host window */
.titlebar {
  display: grid;
  grid-template-columns: 1fr auto 1fr;
  align-items: center;
  height: 37px;
  background: linear-gradient(#41474f, #31363b);
  border-bottom: 1px solid #3daee9;
}
.titlebar h1 { grid-column: 2; margin: 0; font-size: 16px; font-weight: 400; }
.win-buttons { display: flex; justify-content: flex-end; gap: 8px; padding-right: 7px; }
.win-buttons button, .win-buttons svg { display: block; width: 22px; height: 22px; }
.host-menu { display: flex; align-items: center; gap: 26px; height: 34px; padding-left: 13px; font-size: 14px; }

.machine {
  flex: 1;
  min-height: 0;
  display: grid;
  grid-template: minmax(0, 1fr) 26px / minmax(0, 1fr) 26px;
  background: #000;
  border-top: 1px solid #000;
}
.vscroll { padding: 8px 9px; }
.vscroll span { display: block; width: 8px; height: 66%; border-radius: 4px; background: #3daee9; }
.hscroll { padding: 9px; }
.hscroll span { display: block; width: 86.7%; height: 8px; border-radius: 4px; background: #3daee9; }

/* guest window */
.guest { display: flex; flex-direction: column; min-height: 0; background: linear-gradient(90deg, #000 1px, #8d6b90 1px, #6f4d73 6px, #000 6px); color: #232627; overflow: hidden; }
.guest-title { display: flex; height: 25px; background: linear-gradient(#e2e2e2, #ececec 15%, #d8d8d8 35%, #808080); }
.tab {
  display: flex;
  align-items: center;
  gap: 4px;
  padding: 0 4px 2px 8px;
  background: linear-gradient(#a07fa3, #7c5880 25%, #4b2b4f);
  color: #fff;
  font-size: 16px;
}
.tab-icon { width: 17px; height: 17px; background: #6d4a71; border: 2px solid #2c1630; border-top-color: #4a2a4e; }
.tail { display: block; }
.writer { flex: 1; min-height: 0; display: flex; flex-direction: column; margin-left: 7px; border-top: 1px solid #000; background: #e8e8e8; }
.menu { display: flex; align-items: center; gap: 16px; height: 35px; padding: 0 0 2px 7px; font-size: 16px; }
.bars { background: #ececec; border-top: 2px solid #cfcfcf; }
.bar {
  display: flex;
  align-items: center;
  width: max-content;
  height: 53px;
  padding: 0 5px 2px 0;
  border-right: 1px solid #ccc;
  border-bottom: 1px solid #ccc;
  border-top: 1px solid #fff;
}
.grip { width: 2px; height: 34px; margin: 0 11px 0 3px; background: repeating-linear-gradient(#888 0 2px, transparent 2px 5px); }
.bar button { display: flex; align-items: center; justify-content: center; width: 40px; height: 42px; }
.bar button.wide { width: 44px; }
.bar button.chev { width: 32px; }
.bar button.drop { width: 16px; }
.drop::after { content: ""; border: 4px solid transparent; border-top-color: #000; border-bottom: 0; }
.off { opacity: .5; }
.abc { overflow: visible; font: 12px "Noto Sans", sans-serif; fill: #222; }
.sep { width: 1px; height: 30px; margin: 0 4px 0 5px; background: #ccc; }
.bar .pressed { border: 2px solid #a0a0a0; border-radius: 4px; background: #dadada; }
.bar input {
  height: 36px;
  padding: 0 11px;
  border: 1px solid #999;
  border-radius: 2px;
  background: linear-gradient(#eee, #fff 30%);
  color: #232627;
  font: 16px "Noto Sans", sans-serif;
}
.style-box { width: 149px; }
.bar .font-box { width: 149px; margin-left: 3px; }
.bar .size-box { width: 58px; margin-left: 11px; }
.bar .glyph { font: 34px/34px "Liberation Serif", serif; color: #f6f6f6; -webkit-text-stroke: 1px #666; }
.under { text-decoration: underline #777 2px; }
.strike { text-decoration: line-through #777 2px; }
.bar .script { font-weight: 700; }
.glyph sup, .glyph sub { font: 700 15px/18px "Liberation Sans", sans-serif; color: #4a90f0; -webkit-text-stroke: 0; }
.glyph sup { align-self: flex-start; margin-top: 4px; }
.glyph sub { align-self: flex-end; margin-bottom: 4px; }

/* document */
.desk { flex: 1; min-height: 0; display: flex; padding-top: 5px; overflow: hidden; }
.corner { margin: 7px 295px 0 10px; flex: none; }
.canvas { display: flex; flex-direction: column; width: 1446px; flex: none; margin-left: 7px; }
.ruler { display: block; flex: none; margin-bottom: 2px; }
.nums { font: 13px "Noto Sans", sans-serif; fill: #888; text-anchor: middle; }
.page { flex: 1; background: #fff; box-shadow: 0 0 6px #888; clip-path: inset(0 -8px); }
.marks { display: block; }
.text { margin-top: -3px; padding: 0 0 0 138px; color: #000; font: 29px/38px "Liberation Serif", "Noto Sans CJK JP", "Noto Sans CJK KR", "DejaVu Serif", "DejaVu Sans", serif; }
.text p { height: 38px; margin: 0; white-space: pre; }
.text p.tight { margin-top: -4px; }
.text u { text-decoration: underline wavy #f00 1px; text-decoration-skip-ink: none; text-underline-offset: 2px; }
/* control characters and glyphs missing from the font */
.text i { display: inline-block; width: 13px; height: 21px; margin-right: 1px; border: 2px solid; border-color: #444 #5a3c28 #888 #2c4468; background: #fff; }
.text .loose i { margin-right: 2px; }
.text .dense i { margin-right: 0; }
.text i.tofu { width: 17px; height: 25px; margin-right: 0; border: 1px solid #000; vertical-align: -3px; }
.text i.ibeam { background: linear-gradient(#222, #222) center / 2px 100% no-repeat; }
.sw { width: 15px; height: 12px; vertical-align: 5px; }

.status { display: flex; align-items: center; justify-content: flex-end; gap: 5px; height: 27px; padding-right: 1px; }
.status span { margin-left: -1px; font-size: 14px; color: #d6d8da; white-space: nowrap; }
```
